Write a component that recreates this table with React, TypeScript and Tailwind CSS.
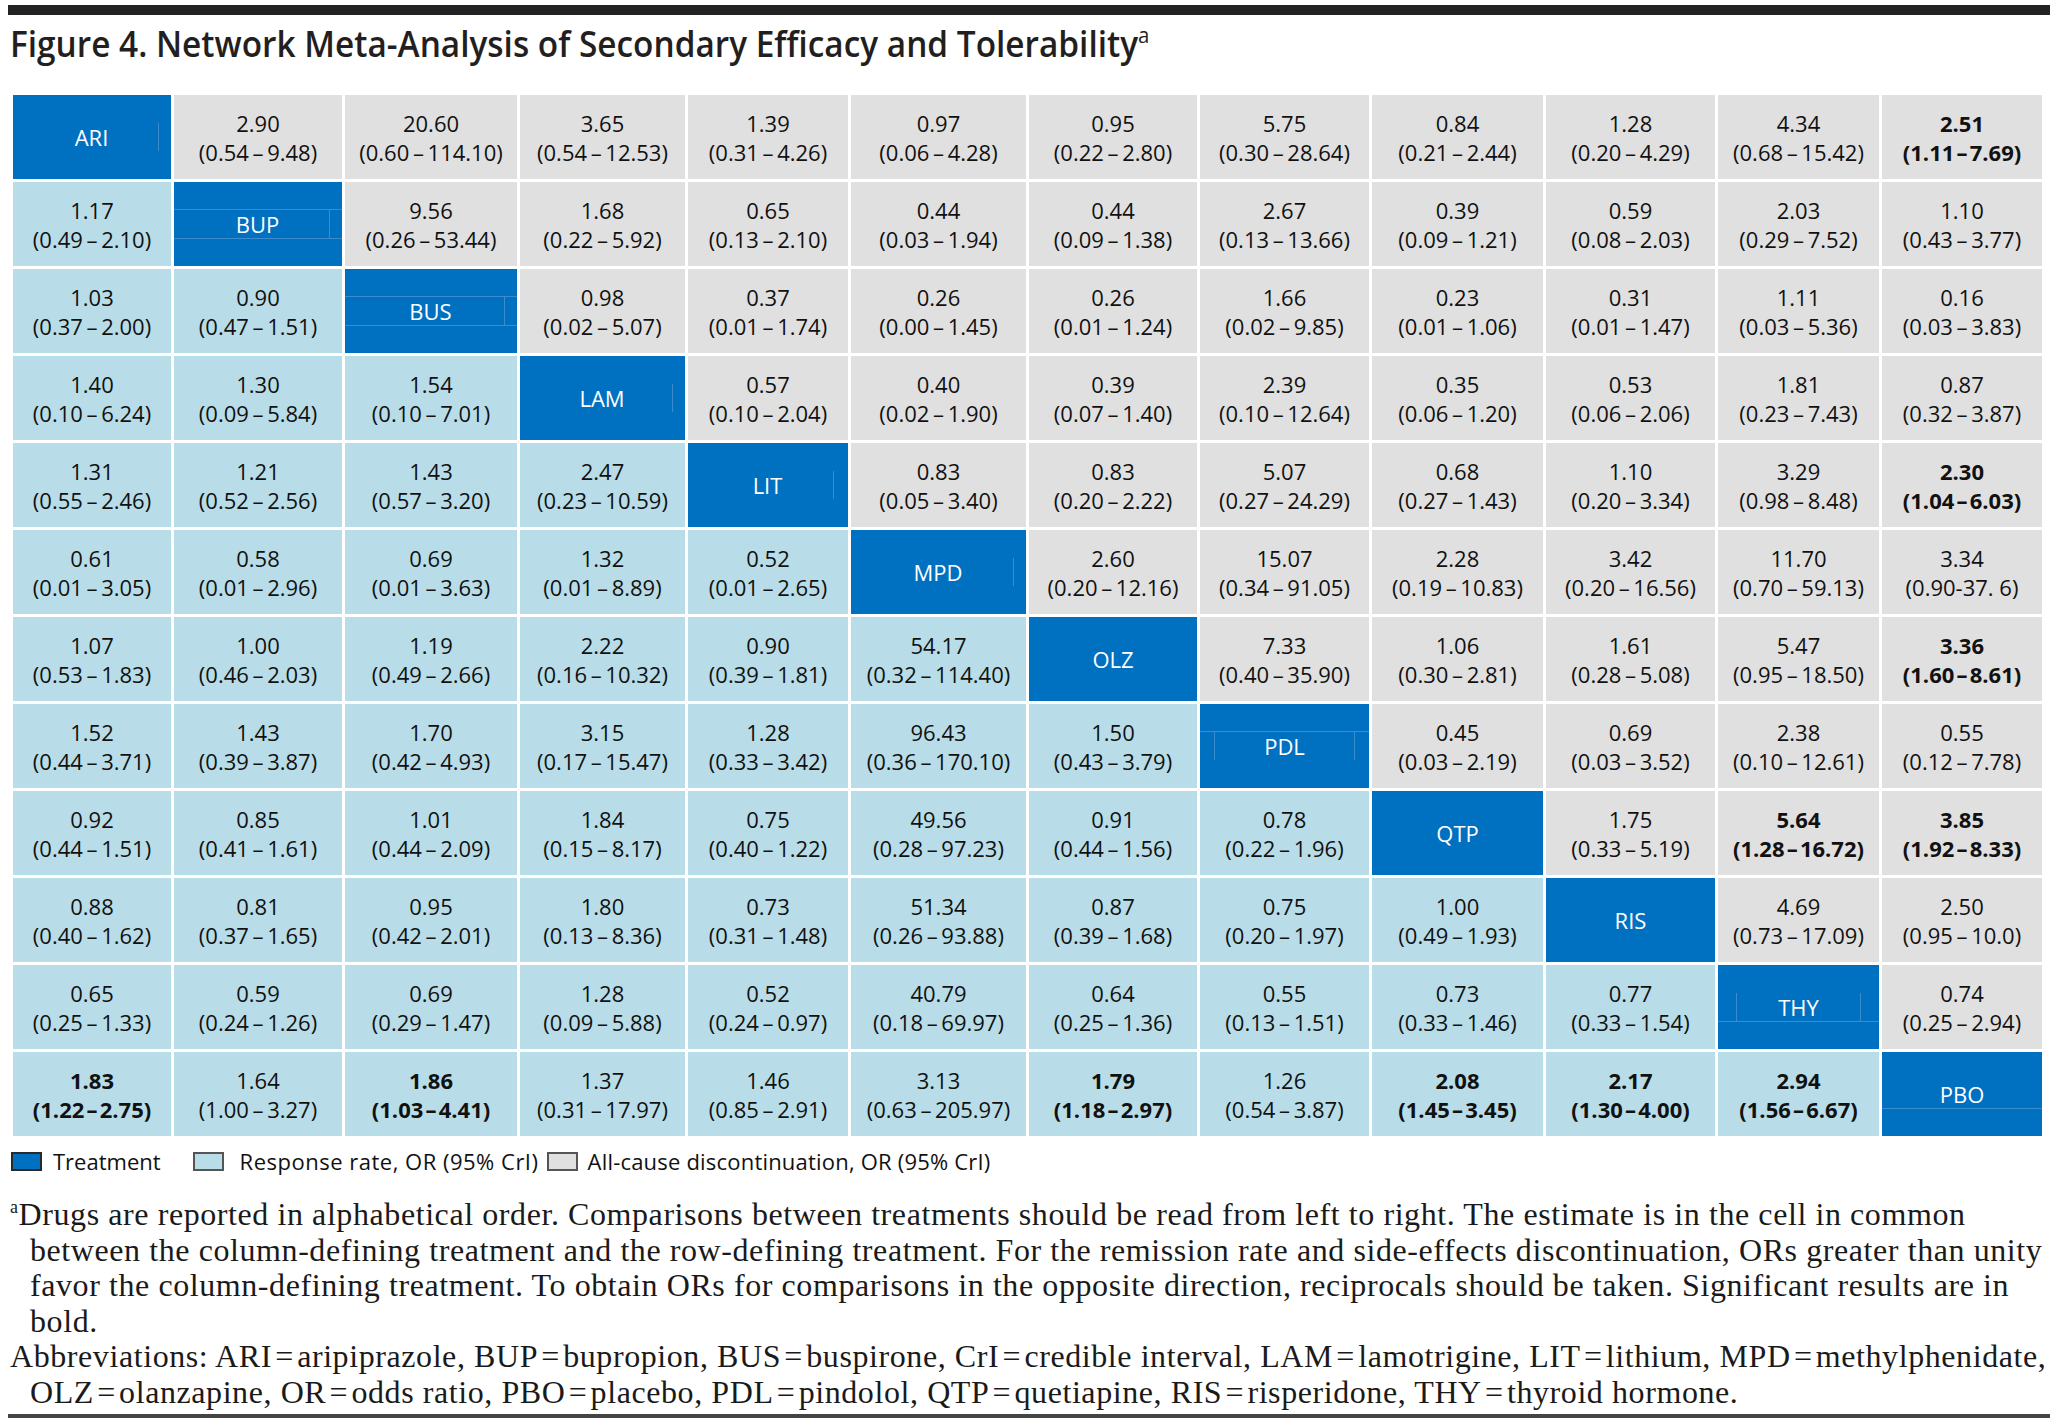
import React from "react";

type C = { v?: string; ci?: string; b?: boolean; t?: string };

const N = (v: string, a: string, b: string, bold = false): C => ({
  v,
  ci: bold ? `(${a}\u200A–\u200A${b})` : `(${a}\u2009–\u2009${b})`,
  b: bold,
});

const rows: C[][] = [
  [{ t: "ARI" }, N("2.90", "0.54", "9.48"), N("20.60", "0.60", "114.10"), N("3.65", "0.54", "12.53"), N("1.39", "0.31", "4.26"), N("0.97", "0.06", "4.28"), N("0.95", "0.22", "2.80"), N("5.75", "0.30", "28.64"), N("0.84", "0.21", "2.44"), N("1.28", "0.20", "4.29"), N("4.34", "0.68", "15.42"), N("2.51", "1.11", "7.69", true)],
  [N("1.17", "0.49", "2.10"), { t: "BUP" }, N("9.56", "0.26", "53.44"), N("1.68", "0.22", "5.92"), N("0.65", "0.13", "2.10"), N("0.44", "0.03", "1.94"), N("0.44", "0.09", "1.38"), N("2.67", "0.13", "13.66"), N("0.39", "0.09", "1.21"), N("0.59", "0.08", "2.03"), N("2.03", "0.29", "7.52"), N("1.10", "0.43", "3.77")],
  [N("1.03", "0.37", "2.00"), N("0.90", "0.47", "1.51"), { t: "BUS" }, N("0.98", "0.02", "5.07"), N("0.37", "0.01", "1.74"), N("0.26", "0.00", "1.45"), N("0.26", "0.01", "1.24"), N("1.66", "0.02", "9.85"), N("0.23", "0.01", "1.06"), N("0.31", "0.01", "1.47"), N("1.11", "0.03", "5.36"), N("0.16", "0.03", "3.83")],
  [N("1.40", "0.10", "6.24"), N("1.30", "0.09", "5.84"), N("1.54", "0.10", "7.01"), { t: "LAM" }, N("0.57", "0.10", "2.04"), N("0.40", "0.02", "1.90"), N("0.39", "0.07", "1.40"), N("2.39", "0.10", "12.64"), N("0.35", "0.06", "1.20"), N("0.53", "0.06", "2.06"), N("1.81", "0.23", "7.43"), N("0.87", "0.32", "3.87")],
  [N("1.31", "0.55", "2.46"), N("1.21", "0.52", "2.56"), N("1.43", "0.57", "3.20"), N("2.47", "0.23", "10.59"), { t: "LIT" }, N("0.83", "0.05", "3.40"), N("0.83", "0.20", "2.22"), N("5.07", "0.27", "24.29"), N("0.68", "0.27", "1.43"), N("1.10", "0.20", "3.34"), N("3.29", "0.98", "8.48"), N("2.30", "1.04", "6.03", true)],
  [N("0.61", "0.01", "3.05"), N("0.58", "0.01", "2.96"), N("0.69", "0.01", "3.63"), N("1.32", "0.01", "8.89"), N("0.52", "0.01", "2.65"), { t: "MPD" }, N("2.60", "0.20", "12.16"), N("15.07", "0.34", "91.05"), N("2.28", "0.19", "10.83"), N("3.42", "0.20", "16.56"), N("11.70", "0.70", "59.13"), { v: "3.34", ci: "(0.90-37. 6)" }],
  [N("1.07", "0.53", "1.83"), N("1.00", "0.46", "2.03"), N("1.19", "0.49", "2.66"), N("2.22", "0.16", "10.32"), N("0.90", "0.39", "1.81"), N("54.17", "0.32", "114.40"), { t: "OLZ" }, N("7.33", "0.40", "35.90"), N("1.06", "0.30", "2.81"), N("1.61", "0.28", "5.08"), N("5.47", "0.95", "18.50"), N("3.36", "1.60", "8.61", true)],
  [N("1.52", "0.44", "3.71"), N("1.43", "0.39", "3.87"), N("1.70", "0.42", "4.93"), N("3.15", "0.17", "15.47"), N("1.28", "0.33", "3.42"), N("96.43", "0.36", "170.10"), N("1.50", "0.43", "3.79"), { t: "PDL" }, N("0.45", "0.03", "2.19"), N("0.69", "0.03", "3.52"), N("2.38", "0.10", "12.61"), N("0.55", "0.12", "7.78")],
  [N("0.92", "0.44", "1.51"), N("0.85", "0.41", "1.61"), N("1.01", "0.44", "2.09"), N("1.84", "0.15", "8.17"), N("0.75", "0.40", "1.22"), N("49.56", "0.28", "97.23"), N("0.91", "0.44", "1.56"), N("0.78", "0.22", "1.96"), { t: "QTP" }, N("1.75", "0.33", "5.19"), N("5.64", "1.28", "16.72", true), N("3.85", "1.92", "8.33", true)],
  [N("0.88", "0.40", "1.62"), N("0.81", "0.37", "1.65"), N("0.95", "0.42", "2.01"), N("1.80", "0.13", "8.36"), N("0.73", "0.31", "1.48"), N("51.34", "0.26", "93.88"), N("0.87", "0.39", "1.68"), N("0.75", "0.20", "1.97"), N("1.00", "0.49", "1.93"), { t: "RIS" }, N("4.69", "0.73", "17.09"), N("2.50", "0.95", "10.0")],
  [N("0.65", "0.25", "1.33"), N("0.59", "0.24", "1.26"), N("0.69", "0.29", "1.47"), N("1.28", "0.09", "5.88"), N("0.52", "0.24", "0.97"), N("40.79", "0.18", "69.97"), N("0.64", "0.25", "1.36"), N("0.55", "0.13", "1.51"), N("0.73", "0.33", "1.46"), N("0.77", "0.33", "1.54"), { t: "THY" }, N("0.74", "0.25", "2.94")],
  [N("1.83", "1.22", "2.75", true), N("1.64", "1.00", "3.27"), N("1.86", "1.03", "4.41", true), N("1.37", "0.31", "17.97"), N("1.46", "0.85", "2.91"), N("3.13", "0.63", "205.97"), N("1.79", "1.18", "2.97", true), N("1.26", "0.54", "3.87"), N("2.08", "1.45", "3.45", true), N("2.17", "1.30", "4.00", true), N("2.94", "1.56", "6.67", true), { t: "PBO" }],
];

/* faint ruling left over from the source table inside the treatment cells */
const ruling: Record<string, { top?: string; mid: string; bot?: string }> = {
  ARI: { mid: "mx-[12px] border-r" },
  BUP: { top: "border-b", mid: "mx-[12px] border-r", bot: "border-t" },
  BUS: { top: "border-b", mid: "mx-[12px] border-r", bot: "border-t" },
  LAM: { mid: "mx-[12px] border-r" },
  LIT: { mid: "mx-[14px] border-r" },
  MPD: { mid: "mx-[12px] border-r" },
  OLZ: { mid: "" },
  PDL: { top: "border-b", mid: "mx-[14px] border-x" },
  QTP: { mid: "" },
  RIS: { mid: "" },
  THY: { mid: "mx-[18px] border-x", bot: "border-t" },
  PBO: { mid: "", bot: "border-t" },
};

function Treatment({ t }: { t: string }) {
  const r = ruling[t];
  return (
    <div className="h-[84px] bg-[#0070c0] flex flex-col text-white text-[22px]">
      <div className={`h-[28px] border-[#3a8ccd] ${r.top ?? ""}`} />
      <div className="h-[28px] flex">
        <div className={`flex-1 flex items-center justify-center leading-[28px] border-[#3a8ccd] ${r.mid}`}>{t}</div>
      </div>
      <div className={`flex-1 border-[#3a8ccd] ${r.bot ?? ""}`} />
    </div>
  );
}

function Cell({ c, r, k }: { c: C; r: number; k: number }) {
  if (c.t) return <Treatment t={c.t} />;
  const bg = r > k ? "bg-[#b8dde8]" : "bg-[#e0e0e0]";
  return (
    <div
      className={`h-[84px] ${bg} flex flex-col items-center justify-center pt-[1px] text-[#111] text-[22px] leading-[29px] whitespace-nowrap ${
        c.b ? "font-bold" : ""
      }`}
    >
      <div>{c.v}</div>
      <div>{c.ci}</div>
    </div>
  );
}

const eq = "\u200A=\u200A";

function Swatch({ bg, border }: { bg: string; border: string }) {
  return <div className={`w-[31px] h-[19px] border-2 ${border} ${bg}`} />;
}

export default function App() {
  const sans = "font-['Open_Sans',sans-serif]";
  return (
    <div className="w-[2058px] h-[1428px] bg-white flex flex-col overflow-hidden">
      <div className="pt-[5px] px-[8px]">
        <div className="h-[10px] bg-[#222]" />
      </div>
      <div className="h-[80px] pl-[10px] pt-[6px]">
        <div className={`${sans} origin-left scale-x-[0.927] text-[36px] leading-[46px] font-semibold text-[#231f20] whitespace-nowrap`}>
          Figure 4. Network Meta-Analysis of Secondary Efficacy and Tolerability
          <sup className="text-[22px] font-normal relative -top-[14px]">a</sup>
        </div>
      </div>
      <div
        className={`${sans} ml-[13px] grid grid-cols-[158px_168px_172px_165px_160px_175px_168px_169px_171px_169px_161px_160px] gap-[3px] w-max`}
      >
        {rows.map((row, r) => row.map((c, k) => <Cell key={`${r}-${k}`} c={c} r={r} k={k} />))}
      </div>
      <div className={`${sans} mt-[13px] ml-[11px] h-[24px] flex items-center text-[22px] leading-[24px] text-[#111] whitespace-nowrap`}>
        <Swatch bg="bg-[#0070c0]" border="border-[#2a2a2a]" />
        <span className="ml-[11px]">Treatment</span>
        <div className="ml-[32px]">
          <Swatch bg="bg-[#b8dde8]" border="border-[#555]" />
        </div>
        <span className="ml-[16px] tracking-[0.5px]">Response rate, OR (95% CrI)</span>
        <div className="ml-[8px]">
          <Swatch bg="bg-[#e0e0e0]" border="border-[#555]" />
        </div>
        <span className="ml-[10px] tracking-[0.2px]">All-cause discontinuation, OR (95% CrI)</span>
      </div>
      <div className="font-['Liberation_Serif',serif] text-[32px] leading-[35.5px] tracking-[0.58px] text-[#1a1a1a] mt-[24px] pl-[10px] whitespace-nowrap">
        <div>
          <sup className="text-[18px] relative -top-[12px]">a</sup>Drugs are reported in alphabetical order. Comparisons between treatments should be read from left to right. The estimate is in the cell in common
        </div>
        <div className="pl-[20px]">
          between the column-defining treatment and the row-defining treatment. For the remission rate and side-effects discontinuation, ORs greater than unity
        </div>
        <div className="pl-[20px]">
          favor the column-defining treatment. To obtain ORs for comparisons in the opposite direction, reciprocals should be taken. Significant results are in
        </div>
        <div className="pl-[20px]">bold.</div>
        <div>
          Abbreviations: ARI{eq}aripiprazole, BUP{eq}bupropion, BUS{eq}buspirone, CrI{eq}credible interval, LAM{eq}lamotrigine, LIT{eq}lithium, MPD{eq}methylphenidate,
        </div>
        <div className="pl-[20px]">
          OLZ{eq}olanzapine, OR{eq}odds ratio, PBO{eq}placebo, PDL{eq}pindolol, QTP{eq}quetiapine, RIS{eq}risperidone, THY{eq}thyroid hormone.
        </div>
      </div>
      <div className="mt-[4px] mx-[8px] h-[4px] bg-[#444]" />
    </div>
  );
}
